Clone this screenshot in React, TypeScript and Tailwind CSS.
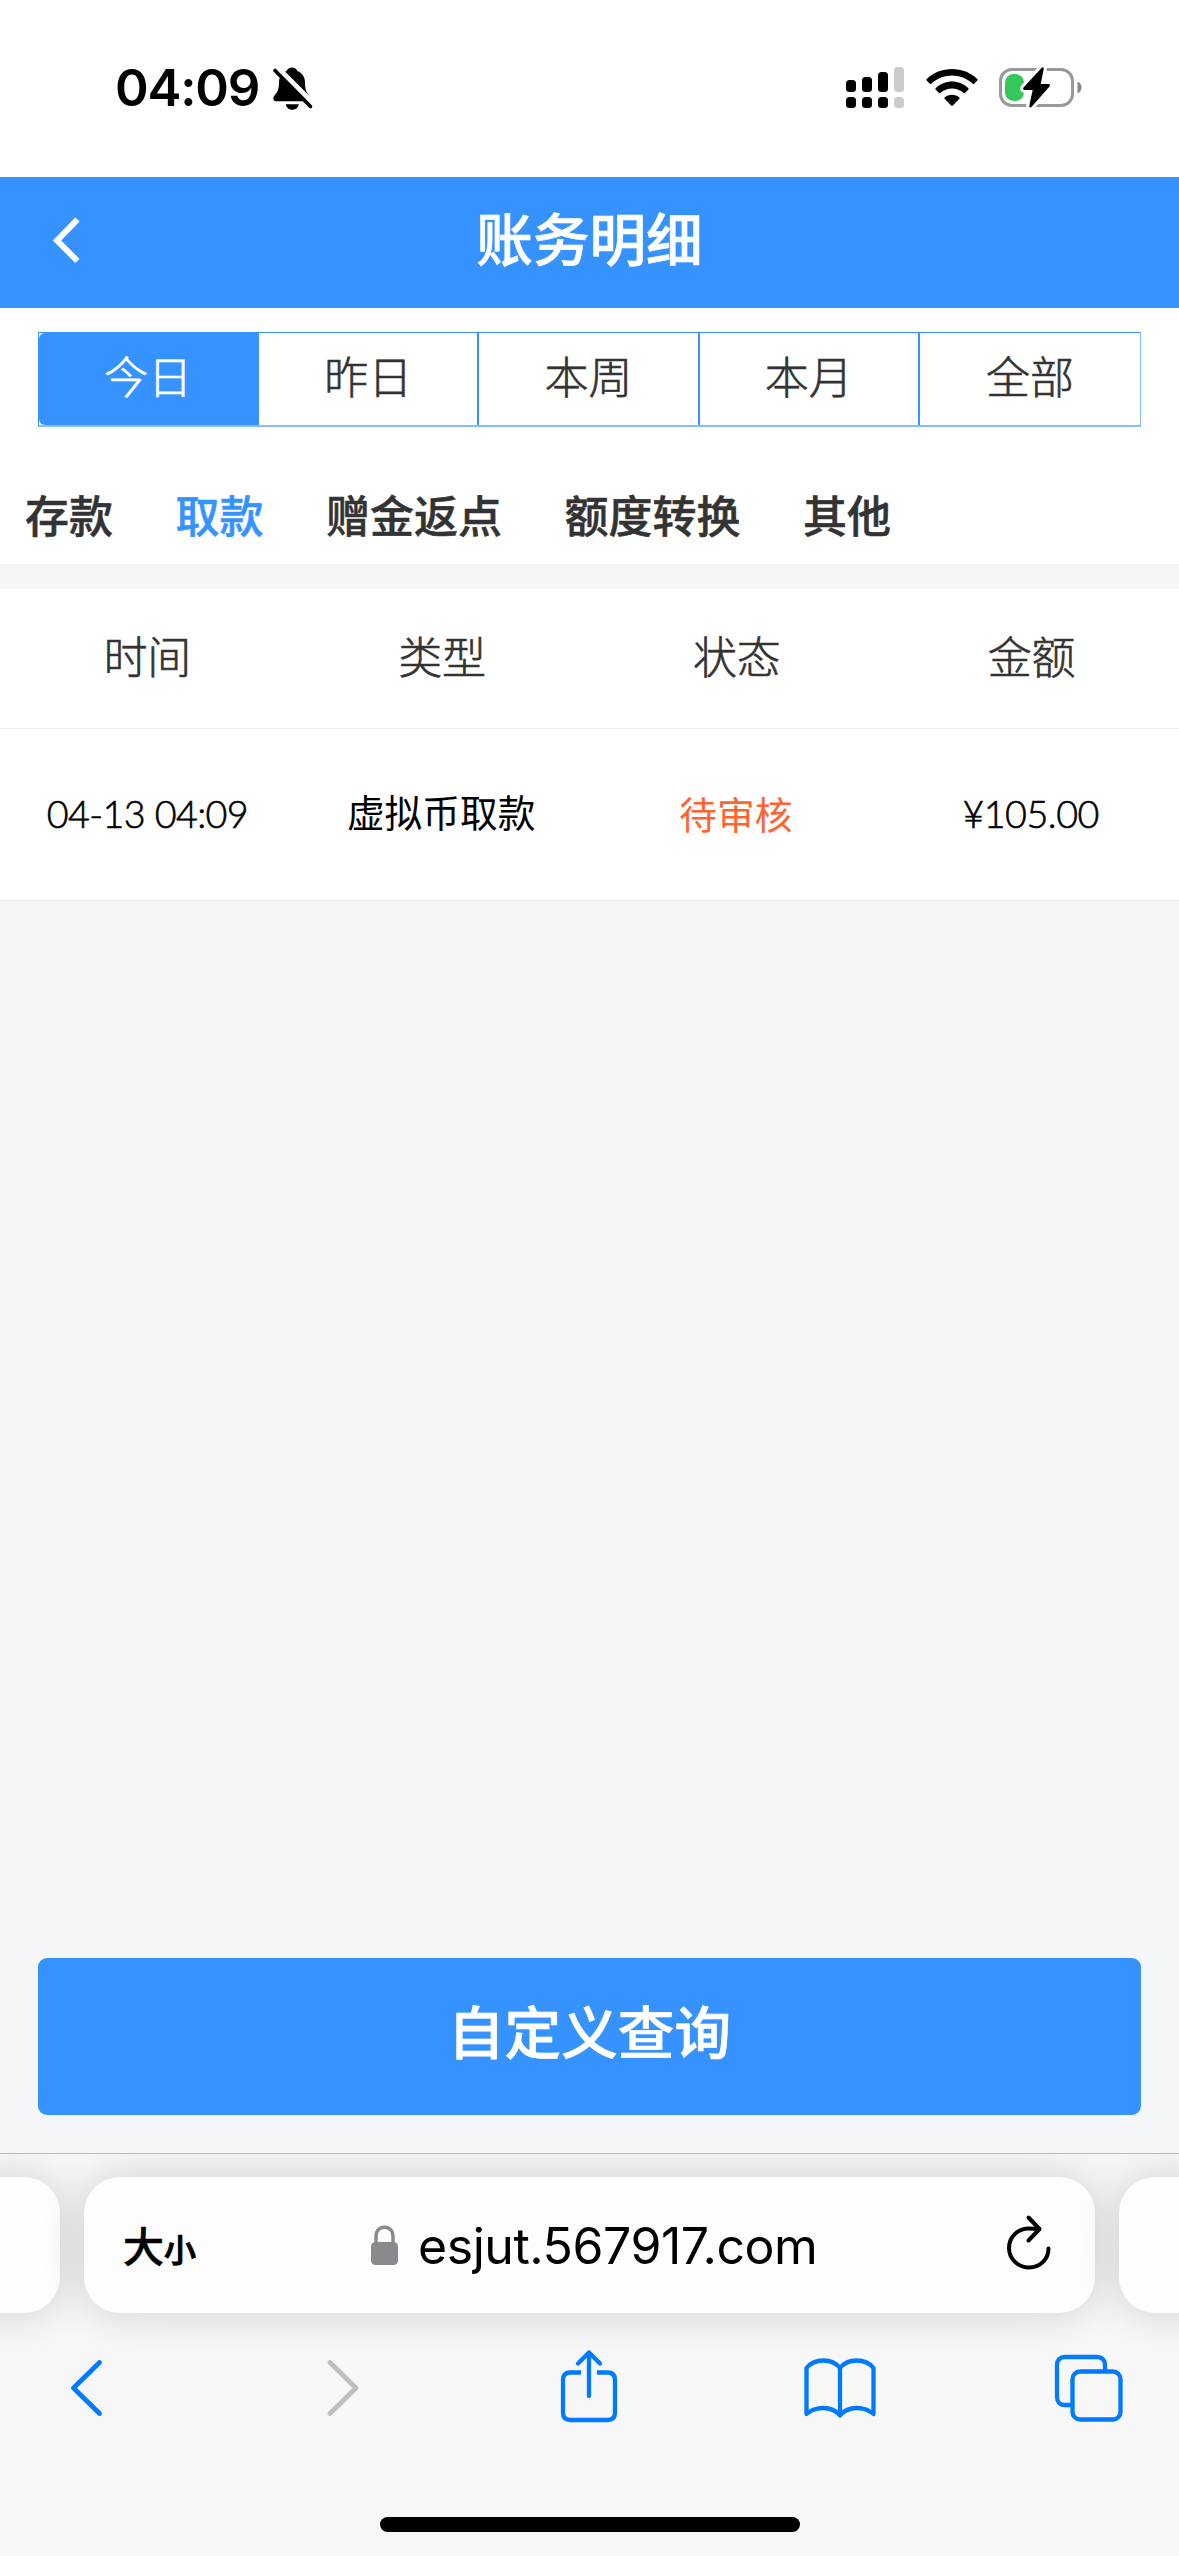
import { useState } from 'react';
import clsx from 'clsx';

const ranges = ['今日', '昨日', '本周', '本月', '全部'];
const categories = ['存款', '取款', '赠金返点', '额度转换', '其他'];
const columns = ['时间', '类型', '状态', '金额'];
const records = [{ time: '04-13 04:09', type: '虚拟币取款', status: '待审核', amount: '¥105.00' }];

function StatusBar() {
    return (
        <div className="flex h-[177px] shrink-0 items-start bg-white pl-[115px] pr-[96px] font-['Inter','Noto_Sans_CJK_SC',sans-serif] text-black">
            <span className="mt-[57px] w-[145px] whitespace-nowrap text-[51px] font-semibold leading-[62px] tracking-[-1.2px]">04:09</span>
            <svg className="ml-[12px] mt-[65px] shrink-0" width="44" height="46" viewBox="0 0 44 46">
                <path
                    d="M20 2.5c2.6 0 4.6 1.3 5.4 3.4 4.600 1.700 7.600 6 7.600 11.500 0 6 1 9.500 4.200 13 1.200 1.300 1.800 2.500 1.800 3.700 0 1.500-1 2.100-2.500 2.100H4c-1.700 0-2.700-.900-2.700-2.500 0-1.600.8-2.800 2-4.200C6.300 26 7 23 7 17.500c0-5.500 3-9.900 7.600-11.600.8-2.100 2.800-3.400 5.400-3.400zM13.800 39.300h13c-.5 3.400-3.100 5.500-6.500 5.500s-6-2.100-6.500-5.500z"
                    fill="#000"
                />
                <path d="M5.500 2.500 41.500 38.500" stroke="#fff" strokeWidth="5" />
                <path d="M3 5.500 38.500 41.500" stroke="#000" strokeWidth="3.600" strokeLinecap="round" />
            </svg>
            <div className="flex-1" />
            <svg className="mt-[66px] shrink-0" width="60" height="44" viewBox="0 0 60 44">
                <g fill="#000">
                    <rect x="1" y="14" width="10" height="12" rx="3.500" />
                    <rect x="17" y="11" width="10" height="15" rx="3.500" />
                    <rect x="33" y="6" width="10" height="20" rx="3.500" />
                    <rect x="1" y="31" width="10" height="11" rx="3.500" />
                    <rect x="17" y="31" width="10" height="11" rx="3.500" />
                    <rect x="33" y="31" width="10" height="11" rx="3.500" />
                </g>
                <g fill="#ccc">
                    <rect x="49" y="1" width="10" height="25" rx="3.500" />
                    <rect x="49" y="31" width="10" height="11" rx="3.500" />
                </g>
            </svg>
            <svg className="ml-[21px] mt-[68px] shrink-0" width="52" height="40" viewBox="0 0 52 40">
                <path d="M0.600 11.200C14-2.300 38-2.300 51.400 11.200c.4.400.4.900 0 1.300l-3.200 3.300c-.4.400-1 .4-1.400 0C35 4.800 17 4.800 5.200 15.800c-.4.400-1 .4-1.400 0L.6 12.500c-.4-.4-.4-.9 0-1.300z" />
                <path d="M9.600 20.300c9-9 23.800-9 32.800 0 .4.400.4.900 0 1.300l-3.300 3.300c-.4.400-.9.400-1.300 0-6.700-6-16.900-6-23.600 0-.4.400-.9.400-1.300 0l-3.300-3.300c-.4-.4-.4-.9 0-1.300z" />
                <path d="M18.600 29.500c4.200-3.700 10.600-3.700 14.800 0 .4.400.4.900 0 1.300L26.800 37.500c-.5.500-1.100.5-1.600 0l-6.600-6.700c-.4-.4-.4-.9 0-1.300z" />
            </svg>
            <svg className="ml-[21px] mt-[66px] shrink-0" width="84" height="44" viewBox="0 0 84 44">
                <rect x="1.500" y="3.500" width="72" height="36" rx="11.500" fill="none" stroke="#999" strokeWidth="3" />
                <path d="M78.500 15.500c2.300.9 4 3.300 4 6s-1.700 5.100-4 6z" fill="#888" />
                <rect x="6" y="8" width="19" height="27" rx="8.500" fill="#34c759" />
                <path
                    d="M42.500 2 24.500 21.500c-.8 1-.3 2.400 1 2.400h8.200l-3.400 15.600c-.4 1.800 1.200 2.600 2.400 1.300L50.500 20.500c.8-1 .3-2.400-1-2.400h-7.800l3-14.800C45 1.200 43.700.700 42.500 2z"
                    stroke="#fff"
                    strokeWidth="6"
                    paintOrder="stroke"
                />
            </svg>
        </div>
    );
}

function SafariBar() {
    return (
        <div className="flex h-[403px] shrink-0 flex-col border-t border-[#b9babd] bg-[#f7f7f7]">
            <div className="h-[198px] shrink-0 overflow-hidden pt-[23px]">
                <div className="-mx-10 flex h-[136px] gap-6">
                    <div className="w-[100px] shrink-0 rounded-[36px] bg-[#fdfdfd] shadow-[0_0_44px_rgba(0,0,0,0.16)]" />
                    <div className="flex flex-1 items-center rounded-[36px] bg-[#fdfdfd] pl-[39px] pr-[42px] font-['Inter','Noto_Sans_CJK_SC',sans-serif] text-black shadow-[0_0_44px_rgba(0,0,0,0.16)]">
                        <div className="flex w-[247px] items-baseline pt-[2px] font-['Noto_Sans_CJK_SC',sans-serif] font-medium">
                            <span className="text-[41px] leading-[60px] [-webkit-text-stroke:0.6px]">大</span>
                            <span className="text-[32px] leading-[60px] [-webkit-text-stroke:1px]">小</span>
                        </div>
                        <svg className="shrink-0" width="29" height="41" viewBox="0 0 29 41">
                            <rect x="1" y="17" width="27" height="23" rx="4.500" fill="#8a8a8e" />
                            <path d="M6 19v-7.500C6 5.500 9.500 2.200 14.500 2.200S23 5.500 23 11.500V19" fill="none" stroke="#8a8a8e" strokeWidth="3.400" />
                        </svg>
                        <span className="ml-[19px] flex-1 whitespace-nowrap pt-[2px] text-[50px] leading-[60px] tracking-[-0.45px]">esjut.567917.com</span>
                        <svg className="mb-[4px] shrink-0" width="48" height="58" viewBox="0 0 48 58" fill="none" stroke="#000" strokeWidth="4" strokeLinecap="round" strokeLinejoin="round">
                            <path d="M43.500 34.500C43.500 45.500 34.800 53.500 24 53.500S4 45 4 34 12.700 14.500 24 14.500c3.500 0 7 .1 10 .5" />
                            <path d="M23.500 3.500 34.500 15 23.500 26.500" />
                        </svg>
                    </div>
                    <div className="w-[100px] shrink-0 rounded-[36px] bg-[#fdfdfd] shadow-[0_0_44px_rgba(0,0,0,0.16)]" />
                </div>
            </div>
            <div className="flex h-[80px] items-center pb-2 pl-[68px]">
                <svg className="shrink-0" width="36" height="60" viewBox="0 0 36 60" fill="none" stroke="#007aff" strokeWidth="4.800" strokeLinecap="round" strokeLinejoin="round">
                    <path d="M31.500 4.500 5.500 30 31.500 55.500" />
                </svg>
                <svg className="ml-[221px] shrink-0" width="36" height="60" viewBox="0 0 36 60" fill="none" stroke="#bfbfbf" strokeWidth="4.800" strokeLinecap="round" strokeLinejoin="round">
                    <path d="M5 4.500 31 30 5 55.500" />
                </svg>
                <svg className="mb-1 ml-[199px] shrink-0" width="58" height="74" viewBox="0 0 58 74" fill="none" stroke="#007aff" strokeWidth="4.300" strokeLinecap="round" strokeLinejoin="round">
                    <path d="M21 23.500H10.500c-5 0-7.500 2.500-7.500 7.500v32.500c0 5 2.500 7.500 7.500 7.500h37c5 0 7.500-2.500 7.500-7.500V31c0-5-2.500-7.500-7.500-7.500H37" strokeLinecap="butt" />
                    <path d="M29 47V3.500M18 14.500 29 3.500 40 14.500" />
                </svg>
                <svg className="ml-[185px] shrink-0" width="74" height="62" viewBox="0 0 74 62" fill="none" stroke="#007aff" strokeWidth="4.300" strokeLinecap="round" strokeLinejoin="round">
                    <path d="M37 11C33 6 27 3.500 20.500 3.500S7.500 6 3.500 11v46C7.500 53.500 13 51 20 51s13 2.500 17 7.500C41 53.500 47 51 54 51s12.500 2.500 16.500 6V11C66.500 6 60 3.500 53.500 3.500S41 6 37 11zM37 11v47" />
                </svg>
                <svg className="ml-[177px] shrink-0" width="70" height="68" viewBox="0 0 70 68" fill="none" stroke="#007aff" strokeWidth="4.300">
                    <path d="M17 51h-6c-5 0-8-3-8-8V11c0-5 3-8 8-8h32c5 0 8 3 8 8v7" />
                    <rect x="18.500" y="17.500" width="48" height="48" rx="7.500" />
                </svg>
            </div>
            <div className="mx-auto mt-[85px] h-[15px] w-[420px] rounded-full bg-black" />
        </div>
    );
}

export default function App() {
    const [range, setRange] = useState('今日');
    const [category, setCategory] = useState('取款');

    return (
        <div className="flex h-[2556px] w-[1179px] flex-col overflow-hidden bg-[#f4f6f8] font-['Lato','Noto_Sans_CJK_SC',sans-serif] text-[#333]">
            <StatusBar />
            <header className="flex h-[131px] shrink-0 items-center bg-[#3592ff] px-[51px] pb-[5px] text-white">
                <svg className="shrink-0" width="30" height="48" viewBox="0 0 30 48" fill="none" stroke="#fff" strokeWidth="6">
                    <path d="M26.500 3.500 6 24.500 26.500 45" />
                </svg>
                <h1 className="flex-1 pb-[8px] pr-[30px] text-center font-['Noto_Sans_CJK_SC',sans-serif] text-[56.6px] font-medium leading-[80px] [-webkit-text-stroke:0.7px]">
                    账务明细
                </h1>
            </header>
            <section className="h-[256px] shrink-0 bg-white pt-6">
                <div className="mx-[38px] grid h-[95px] grid-cols-5 border border-b-2 border-[#3592ff] border-b-[#3592ff]/60 border-r-[#3592ff]/60">
                    {ranges.map((item, index) => (
                        <button
                            key={item}
                            onClick={() => setRange(item)}
                            className={clsx(
                                "pb-[9px] font-['Noto_Sans_CJK_SC',sans-serif] text-[44px] font-light leading-[64px] [-webkit-text-stroke:0.6px]",
                                index < ranges.length - 1 && 'border-r-2 border-[#3592ff]',
                                range === item && 'rounded-l-[6px] bg-[#3592ff] text-white'
                            )}>
                            {item}
                        </button>
                    ))}
                </div>
                <div className="mt-[55px] flex gap-[62.5px] pl-[25px]">
                    {categories.map(item => (
                        <button
                            key={item}
                            onClick={() => setCategory(item)}
                            className={clsx(
                                "font-['Noto_Sans_CJK_SC',sans-serif] text-[44px] font-medium leading-[64px] [-webkit-text-stroke:0.5px]",
                                category === item && 'text-[#3592ff]'
                            )}>
                            {item}
                        </button>
                    ))}
                </div>
            </section>
            <section className="mt-[25px] shrink-0 bg-white">
                <div className="grid h-[140px] grid-cols-4 items-center border-b border-[#eee] pb-[7px] text-center font-['Noto_Sans_CJK_SC',sans-serif] text-[44px] font-light leading-[64px] [-webkit-text-stroke:0.6px]">
                    {columns.map(item => (
                        <span key={item}>{item}</span>
                    ))}
                </div>
                {records.map(record => (
                    <div key={record.time} className="grid h-[172px] grid-cols-4 items-center border-b border-[#eee] text-center text-[37.7px] leading-[56px] text-black">
                        <span className="pb-[2px] font-light tracking-[-0.6px] [-webkit-text-stroke:0.6px]">{record.time}</span>
                        <span className="pb-[7px] pr-[2px] font-['Noto_Sans_CJK_SC',sans-serif]">{record.type}</span>
                        <span className="pb-[3px] pr-[2px] font-['Noto_Sans_CJK_SC',sans-serif] text-[#ff6430]">{record.status}</span>
                        <span className="pb-[2px] pr-[2px] font-light tracking-[-0.5px] [-webkit-text-stroke:0.6px]">{record.amount}</span>
                    </div>
                ))}
            </section>
            <div className="flex-1" />
            <button className="mx-[38px] mb-[38px] h-[157px] shrink-0 rounded-[9px] bg-[#3592ff] pb-[16px] font-['Noto_Sans_CJK_SC',sans-serif] text-[56.6px] font-medium leading-[80px] text-white [-webkit-text-stroke:0.7px]">
                自定义查询
            </button>
            <SafariBar />
        </div>
    );
}
